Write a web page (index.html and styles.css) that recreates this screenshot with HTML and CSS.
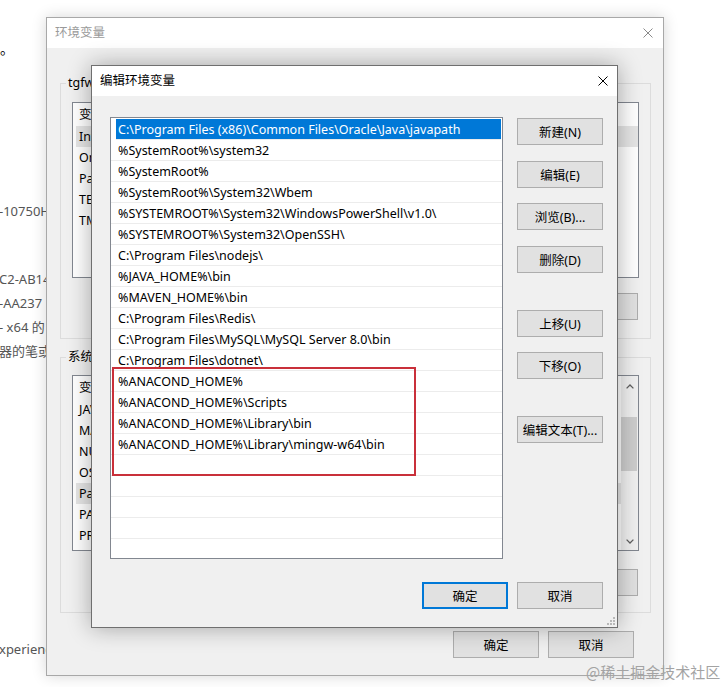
FILE: index.html
```html
<!DOCTYPE html>
<html lang="zh-CN">
<head>
<meta charset="utf-8">
<title>编辑环境变量</title>
<link rel="stylesheet" href="styles.css">
</head>
<body>
<div class="desk">
  <div class="bgpage">
    <div class="bl bl-dot">。</div>
    <div class="bl bl-2">-10750H</div>
    <div class="bl bl-3">C2-AB14</div>
    <div class="bl bl-4">-AA237</div>
    <div class="bl bl-4">- x64 的</div>
    <div class="bl bl-4">器的笔或</div>
    <div class="bl bl-7">xperienc</div>
  </div>

  <div class="win back">
    <div class="titlebar">
      <span class="title title-off">环境变量</span>
      <svg class="xicon" width="10" height="10" viewBox="0 0 10 10"><path d="M0.5 0.5L9.5 9.5M9.5 0.5L0.5 9.5" stroke="#8a8a8a" stroke-width="1"/></svg>
    </div>
    <div class="bbody">
      <div class="group g1">
        <div class="glabel">tgfw 的用户变量(U)</div>
        <div class="lv">
          <div class="lvh">变量</div>
          <div class="lvr sel">IntelliJ IDEA</div>
          <div class="lvr">OneDrive</div>
          <div class="lvr">Path</div>
          <div class="lvr">TEMP</div>
          <div class="lvr">TMP</div>
        </div>
        <div class="gbtns g1b">
          <button class="btn">新建(N)...</button>
          <button class="btn">编辑(E)...</button>
          <button class="btn">删除(D)</button>
        </div>
      </div>
      <div class="group g2">
        <div class="glabel">系统变量(S)</div>
        <div class="lv lv2">
          <div class="lvc">
            <div class="lvh">变量</div>
            <div class="lvr">JAVA_HOME</div>
            <div class="lvr">MAVEN_HOME</div>
            <div class="lvr">NUMBER_OF_PROCESSORS</div>
            <div class="lvr">OS</div>
            <div class="lvr sel">Path</div>
            <div class="lvr">PATHEXT</div>
            <div class="lvr">PROCESSOR_ARCHITECTURE</div>
          </div>
          <div class="sb">
            <div class="sbu"><svg width="8" height="5" viewBox="0 0 8 5"><path d="M0.6 4.4L4 1L7.4 4.4" fill="none" stroke="#606060" stroke-width="1.3"/></svg></div>
            <div class="sbt"><div class="thumb"></div></div>
            <div class="sbd"><svg width="8" height="5" viewBox="0 0 8 5"><path d="M0.6 0.6L4 4L7.4 0.6" fill="none" stroke="#606060" stroke-width="1.3"/></svg></div>
          </div>
        </div>
        <div class="gbtns g2b">
          <button class="btn">新建(W)...</button>
          <button class="btn">编辑(I)...</button>
          <button class="btn">删除(L)</button>
        </div>
      </div>
      <div class="dlgbtns">
        <button class="btn">确定</button>
        <button class="btn">取消</button>
      </div>
    </div>
  </div>

  <div class="win front">
    <div class="titlebar ftitle">
      <span class="title">编辑环境变量</span>
      <svg class="xicon" width="10" height="10" viewBox="0 0 10 10"><path d="M0.5 0.5L9.5 9.5M9.5 0.5L0.5 9.5" stroke="#000" stroke-width="1"/></svg>
    </div>
    <div class="fbody">
      <div class="frow">
        <div class="plist">
          <div class="prow sel">C:\Program Files (x86)\Common Files\Oracle\Java\javapath</div>
          <div class="prow">%SystemRoot%\system32</div>
          <div class="prow">%SystemRoot%</div>
          <div class="prow">%SystemRoot%\System32\Wbem</div>
          <div class="prow">%SYSTEMROOT%\System32\WindowsPowerShell\v1.0\</div>
          <div class="prow">%SYSTEMROOT%\System32\OpenSSH\</div>
          <div class="prow">C:\Program Files\nodejs\</div>
          <div class="prow">%JAVA_HOME%\bin</div>
          <div class="prow">%MAVEN_HOME%\bin</div>
          <div class="prow">C:\Program Files\Redis\</div>
          <div class="prow">C:\Program Files\MySQL\MySQL Server 8.0\bin</div>
          <div class="prow">C:\Program Files\dotnet\</div>
          <div class="prow">%ANACOND_HOME%</div>
          <div class="prow">%ANACOND_HOME%\Scripts</div>
          <div class="prow">%ANACOND_HOME%\Library\bin</div>
          <div class="prow">%ANACOND_HOME%\Library\mingw-w64\bin</div>
          <div class="prow"></div>
          <div class="prow"></div>
          <div class="prow"></div>
          <div class="prow"></div>
          <div class="prow"></div>
          <div class="prow"></div>
        </div>
        <div class="pbtns">
          <button class="btn">新建(N)</button>
          <button class="btn">编辑(E)</button>
          <button class="btn">浏览(B)...</button>
          <button class="btn">删除(D)</button>
          <button class="btn">上移(U)</button>
          <button class="btn">下移(O)</button>
          <button class="btn">编辑文本(T)...</button>
        </div>
      </div>
      <div class="fbtns">
        <button class="btn def">确定</button>
        <button class="btn">取消</button>
      </div>
    </div>
    <svg class="grip" width="8" height="8" viewBox="0 0 8 8"><g fill="#b8b8b8"><rect x="6" y="0" width="2" height="2"/><rect x="3" y="3" width="2" height="2"/><rect x="6" y="3" width="2" height="2"/><rect x="0" y="6" width="2" height="2"/><rect x="3" y="6" width="2" height="2"/><rect x="6" y="6" width="2" height="2"/></g></svg>
  </div>

  <div class="annot"></div>
  <div class="watermark">@稀土掘金技术社区</div>
</div>
</body>
</html>
```

FILE: styles.css
```css
* { box-sizing: border-box; }
html, body { margin: 0; padding: 0; }
body {
  background: #fff;
  font-family: "Noto Sans", "Noto Sans CJK SC", sans-serif;
  font-size: 12.5px;
  color: #000;
  overflow: hidden;
}
.desk { position: relative; width: 727px; height: 687px; overflow: hidden; }

/* page behind the windows */
.bgpage { padding-top: 37px; color: #555; font-size: 13px; line-height: 22px; white-space: nowrap; }
.bl { margin-left: -1px; height: 22px; }
.bl-dot { color: #000; margin-left: 0; font-size: 14px; line-height: 20px; height: 22px; padding-top: 2px; }
.bl-2 { margin-top: 141px; }
.bl-3 { margin-top: 46px; }
.bl-4 { margin-top: 2px; }
.bl-7 { margin-top: 276px; }

/* windows */
.win { position: absolute; display: flex; flex-direction: column; background: #f0f0f0; }
.back {
  left: 46px; top: 17px; width: 618px; height: 659px;
  border: 1px solid #a8a8a8;
  box-shadow: 0 0 14px rgba(0, 0, 0, 0.16);
}
.front {
  left: 91px; top: 65px; width: 527px; height: 563px;
  border: 1px solid #6f6f6f;
  box-shadow: 0 0 22px rgba(0, 0, 0, 0.32);
}
.titlebar {
  flex: none; height: 30px; background: #fff;
  display: flex; align-items: center; justify-content: space-between;
  padding: 0 10px 0 8px;
}
.ftitle { padding: 0 9px 0 8px; }
.title { line-height: 16px; }
.title-off { color: #9a9a9a; }
.xicon { display: block; }

.btn {
  width: 86px; height: 27px; padding: 0;
  background: #e1e1e1; border: 1px solid #adadad;
  font: inherit; color: #000;
  display: flex; align-items: center; justify-content: center;
  flex: none;
}
.btn.def { border: 2px solid #0078d7; }

/* back dialog body */
.bbody { padding-left: 13px; }
.group { width: 591px; height: 256px; border: 1px solid #dcdcdc; }
.g1 { margin-top: 35px; }
.g2 { margin-top: 18px; }
.glabel {
  width: fit-content; margin: -9px 0 0 5px; padding: 0 2px;
  background: #f0f0f0; line-height: 16px; white-space: nowrap;
}
.lv {
  margin: 11px 0 0 11px; width: 567px; height: 176px;
  background: #fff; border: 1px solid #828790; overflow: hidden; white-space: nowrap;
}
.g2 .lv { margin-top: 10px; }
.lvh { height: 23px; line-height: 23px; padding-left: 6px; }
.lvr { height: 21px; line-height: 21px; padding-left: 6px; }
.lvr.sel { background: #e5e5e5; margin-left: 3px; padding-left: 3px; }
.lv2 { display: grid; grid-template-columns: 1fr 17px; }
.sb { display: flex; flex-direction: column; background: #f0f0f0; }
.sbu { height: 21px; display: flex; align-items: center; justify-content: center; }
.sbt { flex: 1; padding: 20px 1px 0 0; }
.thumb { height: 54px; background: #cdcdcd; }
.sbd { height: 17px; display: flex; align-items: center; justify-content: center; }
.gbtns { display: flex; justify-content: flex-end; gap: 8px; margin-right: 12px; }
.g1b { margin-top: 15px; }
.g2b { margin-top: 18px; }
.dlgbtns { display: flex; justify-content: flex-end; gap: 9px; margin: 18px 29px 0 0; }

/* front dialog body */
.fbody { padding: 21px 14px 0 18px; }
.frow { display: flex; gap: 14px; }
.plist {
  width: 393px; height: 442px; flex: none;
  border: 1px solid #828790; background: #fff;
  padding-top: 1px; overflow: hidden; white-space: nowrap;
}
.prow { height: 21px; line-height: 18px; padding-top: 2px; border-bottom: 1px solid #ececec; padding-left: 7px; }
.prow.sel { background: #0078d7; color: #fff; margin: 0 1px 0 5px; padding-left: 2px; }
.pbtns { display: flex; flex-direction: column; padding-top: 1px; }
.pbtns .btn:nth-child(2) { margin-top: 16px; }
.pbtns .btn:nth-child(3) { margin-top: 15px; }
.pbtns .btn:nth-child(4) { margin-top: 16px; }
.pbtns .btn:nth-child(5) { margin-top: 37px; }
.pbtns .btn:nth-child(6) { margin-top: 15px; }
.pbtns .btn:nth-child(7) { margin-top: 37px; }
.fbtns { display: flex; justify-content: flex-end; gap: 9px; margin-top: 23px; }
.grip { position: absolute; right: 2px; bottom: 2px; }

/* overlays */
.annot {
  position: absolute; left: 112px; top: 367px; width: 304px; height: 109px;
  border: 2px solid #c9303a;
}
.watermark {
  position: absolute; left: 586px; top: 662px;
  font-family: "Noto Sans CJK SC", sans-serif; font-size: 15px; line-height: 20px;
  color: #a3a3a3; white-space: nowrap;
}
```
